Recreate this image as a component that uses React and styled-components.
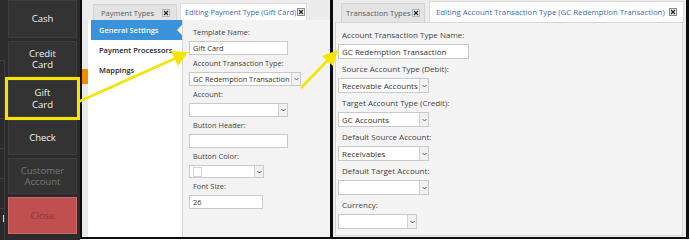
import styled, { createGlobalStyle } from "styled-components";

const GlobalStyle = createGlobalStyle`
  html, body {
    margin: 0;
    padding: 0;
    background: #ffffff;
  }
  body {
    font-family: "Open Sans", "Noto Sans", sans-serif;
  }
`;

const Screen = styled.div`
  position: relative;
  display: flex;
  width: 690px;
  height: 240px;
  overflow: hidden;
  background: #ffffff;
`;

// ******* POS panel *******

const PosPanel = styled.div`
  display: flex;
  width: 80px;
  height: 240px;
  background: #2b2b2b;
  flex-shrink: 0;
`;

const EdgeStrip = styled.div`
  display: flex;
  flex-direction: column;
  width: 5px;
  margin-right: 3px;
  padding-top: 60px;
`;

const EdgeCell = styled.div`
  position: relative;
  height: ${(p) => p.$h}px;
  border-top: 1px solid #404040;
  border-right: 1px solid #3e3e3e;
  box-sizing: border-box;
`;

const EdgeMark = styled.span`
  position: absolute;
  right: 0;
  top: 6px;
  width: 1px;
  height: 7px;
  background: #d8d8d8;
`;

const ButtonColumn = styled.div`
  display: flex;
  flex-direction: column;
  gap: 3px;
  width: 69px;
`;

const PosButton = styled.div`
  display: flex;
  align-items: center;
  justify-content: center;
  height: ${(p) => p.$h}px;
  box-sizing: border-box;
  background: ${(p) => (p.$danger ? "#c0504f" : "#333333")};
  border: 1px solid ${(p) => (p.$danger ? "#cf6a69" : "#3e3e3e")};
  color: ${(p) => (p.$danger ? "#8e3535" : p.$muted ? "#777777" : "#f2f2f2")};
  font-size: 9.5px;
  line-height: 11.5px;
  text-align: center;
  outline: ${(p) => (p.$marked ? "3px solid #f4e400" : "none")};
  outline-offset: 0;
`;

// ******* Windows *******

const Window = styled.div`
  display: flex;
  flex-direction: column;
  width: ${(p) => p.$w}px;
  height: 239px;
  box-sizing: border-box;
  background: #ececec;
  border-left: ${(p) => p.$left}px solid #0d0d0d;
  border-right: ${(p) => p.$right}px solid #0d0d0d;
  border-bottom: 2px solid #0d0d0d;
  flex-shrink: 0;
`;

const TabStrip = styled.div`
  display: flex;
  align-items: flex-end;
  gap: ${(p) => p.$gap}px;
  height: ${(p) => p.$h}px;
  padding-left: ${(p) => p.$pad}px;
  flex-shrink: 0;
  background: #ececec;
`;

const Tab = styled.div`
  display: flex;
  align-items: center;
  justify-content: space-between;
  width: ${(p) => p.$w}px;
  height: ${(p) => p.$h}px;
  box-sizing: border-box;
  padding: 0 ${(p) => p.$padR}px 0 ${(p) => p.$padL}px;
  background: ${(p) => (p.$active ? "#ffffff" : "#e3e3e3")};
  border: 1px solid ${(p) => (p.$active ? "#dcdcdc" : "#d2d2d2")};
  border-bottom: none;
  color: ${(p) => (p.$active ? "#3b6db5" : "#5a5a5a")};
  font-size: ${(p) => p.$fs}px;
  white-space: nowrap;
`;

const CloseBox = styled.span`
  display: flex;
  align-items: center;
  justify-content: center;
  width: 8px;
  height: 8px;
  box-sizing: border-box;
  flex-shrink: 0;
  border: 1px solid ${(p) => (p.$active ? "#8a8a8a" : "#b4b4b4")};
  background: ${(p) => (p.$active ? "#f4f4f4" : "#ececec")};
`;

const WindowBody = styled.div`
  display: flex;
  flex: 1;
  min-height: 0;
`;

const SideStrip = styled.div`
  width: 6px;
  background: #e9e9e9;
  padding-top: 49px;
`;

const OrangeBlock = styled.div`
  width: 6px;
  height: 15px;
  background: #f08c00;
`;

const SideNav = styled.div`
  display: flex;
  flex-direction: column;
  width: 94px;
  padding-left: 3px;
  box-sizing: border-box;
  background: #ffffff;
`;

const NavItem = styled.div`
  position: relative;
  display: flex;
  align-items: center;
  height: 20px;
  padding-left: 8px;
  background: ${(p) => (p.$active ? "#3a92db" : "transparent")};
  color: ${(p) => (p.$active ? "#ffffff" : "#1e1e1e")};
  font-size: 7.5px;
  font-weight: 600;
  white-space: nowrap;

  &::after {
    content: "";
    display: ${(p) => (p.$active ? "block" : "none")};
    position: absolute;
    right: 0;
    top: 5px;
    border-top: 5px solid transparent;
    border-bottom: 5px solid transparent;
    border-right: 5px solid #ffffff;
  }
`;

const Editor = styled.div`
  flex: 1;
  display: flex;
  flex-direction: column;
  padding: ${(p) => p.$padTop}px 0 0 ${(p) => p.$padLeft}px;
  background: #f3f3f3;
  border-left: 1px solid #d6d6d6;
`;

const Panel = styled.div`
  flex: 1;
  display: flex;
  flex-direction: column;
  margin: 0 3px 1px 2px;
  padding: 6px 0 0 2px;
  background: #f4f4f4;
  border: 1px solid #d6d6d6;
`;

const Field = styled.div`
  display: flex;
  flex-direction: column;
  margin-bottom: ${(p) => p.$gap}px;
`;

const Label = styled.div`
  padding-left: 4px;
  margin-bottom: 3px;
  font-size: ${(p) => p.$fs}px;
  line-height: ${(p) => p.$lh}px;
  color: #444444;
  white-space: nowrap;
`;

const Box = styled.div`
  display: flex;
  align-items: center;
  width: ${(p) => p.$w}px;
  height: ${(p) => p.$h}px;
  box-sizing: border-box;
  padding-left: 3px;
  background: #ffffff;
  border: 1px solid #c9c9c9;
  font-size: ${(p) => p.$fs}px;
  color: #333333;
  white-space: nowrap;
  overflow: hidden;
`;

const BoxText = styled.span`
  flex: 1;
  overflow: hidden;
`;

const DropButton = styled.span`
  display: flex;
  align-items: center;
  justify-content: center;
  width: 9px;
  height: 100%;
  box-sizing: border-box;
  background: #f1f1f1;
  border-left: 1px solid #d0d0d0;
  flex-shrink: 0;
`;

const Swatch = styled.span`
  width: 7px;
  height: 8px;
  border: 1px solid #d4d4d4;
  background: #ffffff;
`;

const Overlay = styled.svg`
  position: absolute;
  left: 0;
  top: 0;
  pointer-events: none;
`;

function Cross() {
  return (
    <svg width="6" height="6" viewBox="0 0 6 6">
      <path d="M1 1 L5 5 M5 1 L1 5" stroke="#222" strokeWidth="1.3" />
    </svg>
  );
}

function Chevron() {
  return (
    <svg width="5" height="4" viewBox="0 0 5 4">
      <path d="M0.5 1 L2.5 3 L4.5 1" stroke="#555" strokeWidth="0.9" fill="none" />
    </svg>
  );
}

function Input({ w, h, fs, children }) {
  return (
    <Box $w={w} $h={h} $fs={fs}>
      <BoxText>{children}</BoxText>
    </Box>
  );
}

function Select({ w, h, fs, swatch, children }) {
  return (
    <Box $w={w} $h={h} $fs={fs}>
      {swatch && <Swatch />}
      <BoxText>{children}</BoxText>
      <DropButton>
        <Chevron />
      </DropButton>
    </Box>
  );
}

const paymentFields = [
  { label: "Template Name:", kind: "input", w: 99, value: "Gift Card" },
  { label: "Account Transaction Type:", kind: "select", w: 112, value: "GC Redemption Transaction" },
  { label: "Account:", kind: "select", w: 99, value: "" },
  { label: "Button Header:", kind: "input", w: 99, value: "" },
  { label: "Button Color:", kind: "select", w: 75, value: "", swatch: true, h: 13 },
  { label: "Font Size:", kind: "input", w: 74, value: "26" },
];

const accountFields = [
  { label: "Account Transaction Type Name:", kind: "input", w: 131, value: "GC Redemption Transaction" },
  { label: "Source Account Type (Debit):", kind: "select", w: 91, value: "Receivable Accounts" },
  { label: "Target Account Type (Credit):", kind: "select", w: 91, value: "GC Accounts" },
  { label: "Default Source Account:", kind: "select", w: 91, value: "Receivables" },
  { label: "Default Target Account:", kind: "select", w: 91, value: "" },
  { label: "Currency:", kind: "select", w: 79, value: "" },
];

function FieldList({ fields, fs, lh, h, gap }) {
  return fields.map((f) => (
    <Field key={f.label} $gap={gap}>
      <Label $fs={fs} $lh={lh}>
        {f.label}
      </Label>
      {f.kind === "input" ? (
        <Input w={f.w} h={f.h || h} fs={fs}>
          {f.value}
        </Input>
      ) : (
        <Select w={f.w} h={f.h || h} fs={fs} swatch={f.swatch}>
          {f.value}
        </Select>
      )}
    </Field>
  ));
}

export default function App() {
  return (
    <>
      <GlobalStyle />
      <Screen>
        <PosPanel>
          <EdgeStrip>
            <EdgeCell $h={58} />
            <EdgeCell $h={30} />
            <EdgeCell $h={30} />
            <EdgeCell $h={30} />
            <EdgeCell $h={32}>
              <EdgeMark />
            </EdgeCell>
          </EdgeStrip>
          <ButtonColumn>
            <PosButton $h={38}>Cash</PosButton>
            <PosButton $h={36}>
              Credit
              <br />
              Card
            </PosButton>
            <PosButton $h={37} $marked>
              Gift
              <br />
              Card
            </PosButton>
            <PosButton $h={35}>Check</PosButton>
            <PosButton $h={36} $muted>
              Customer
              <br />
              Account
            </PosButton>
            <PosButton $h={37} $danger>
              Close
            </PosButton>
          </ButtonColumn>
        </PosPanel>

        <Window $w={252} $left={2} $right={2}>
          <TabStrip $h={20} $pad={11} $gap={3}>
            <Tab $w={84} $h={16} $fs={7.5} $padL={7} $padR={6}>
              Payment Types
              <CloseBox>
                <Cross />
              </CloseBox>
            </Tab>
            <Tab $w={127} $h={17} $fs={7.4} $padL={4} $padR={1} $active>
              Editing Payment Type (Gift Card)
              <CloseBox $active>
                <Cross />
              </CloseBox>
            </Tab>
          </TabStrip>
          <WindowBody>
            <SideStrip>
              <OrangeBlock />
            </SideStrip>
            <SideNav>
              <NavItem $active>General Settings</NavItem>
              <NavItem>Payment Processors</NavItem>
              <NavItem>Mappings</NavItem>
            </SideNav>
            <Editor $padTop={7} $padLeft={6}>
              <FieldList fields={paymentFields} fs={7.4} lh={11} h={14} gap={3} />
            </Editor>
          </WindowBody>
        </Window>

        <Window $w={357} $left={1} $right={3}>
          <TabStrip $h={22} $pad={8} $gap={4}>
            <Tab $w={84} $h={19} $fs={7.7} $padL={4} $padR={4}>
              Transaction Types
              <CloseBox>
                <Cross />
              </CloseBox>
            </Tab>
            <Tab $w={255} $h={21} $fs={7.8} $padL={6} $padR={6} $active>
              Editing Account Transaction Type (GC Redemption Transaction)
              <CloseBox $active>
                <Cross />
              </CloseBox>
            </Tab>
          </TabStrip>
          <Panel>
            <FieldList fields={accountFields} fs={8} lh={12} h={15} gap={4} />
          </Panel>
        </Window>

        <Overlay width="690" height="240" viewBox="0 0 690 240">
          <line x1="78" y1="102" x2="176" y2="58" stroke="#f4e400" strokeWidth="2.6" />
          <polygon points="188,52 178,66 171,51" fill="#f4e400" />
          <line x1="301" y1="88" x2="329" y2="59" stroke="#f4e400" strokeWidth="2.6" />
          <polygon points="338,50 333,66 322,56" fill="#f4e400" />
        </Overlay>
      </Screen>
    </>
  );
}
